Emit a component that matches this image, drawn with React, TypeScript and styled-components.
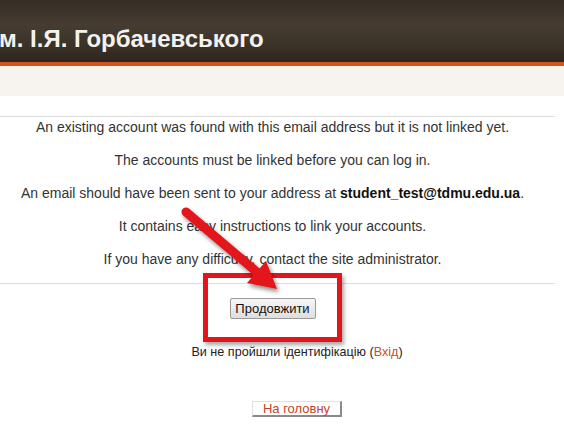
import styled, { createGlobalStyle } from "styled-components";

const GlobalStyle = createGlobalStyle`
  html, body {
    margin: 0;
    padding: 0;
    background: #fff;
    overflow: hidden;
  }
  body {
    font-family: "Liberation Sans", Arial, sans-serif;
    color: #333;
  }
`;

const Page = styled.div`
  position: relative;
  width: 564px;
  height: 439px;
  overflow: hidden;
`;

const Header = styled.header`
  height: 62px;
  display: flex;
  align-items: flex-end;
  background: linear-gradient(to bottom, #352c24 0%, #463c32 40%, #3a3128 75%, #2d251e 100%);
  overflow: hidden;
`;

const SiteTitle = styled.h1`
  margin: 0 0 10px -1px;
  font-size: 24px;
  line-height: 26px;
  font-weight: bold;
  color: #f4f2ee;
  white-space: nowrap;
`;

const Stripe = styled.div`
  height: 4px;
  background: #d4531f;
`;

const NavBar = styled.div`
  height: 30px;
  background: #f5f4ef;
`;

const Notice = styled.section`
  margin-top: 20px;
  width: 555px;
  border-top: 1px solid #dcdcdc;
  border-bottom: 1px solid #dcdcdc;
  padding: 2px 10px 16px 0;
  box-sizing: border-box;
  text-align: center;
`;

const Line = styled.p`
  margin: 0 0 17px;
  font-size: 14px;
  line-height: 16px;
  color: #333;
  &:last-child {
    margin-bottom: 0;
  }
  strong {
    color: #111;
  }
`;

const Actions = styled.div`
  display: flex;
  justify-content: center;
  width: 545px;
  padding-top: 14px;
`;

const ContinueButton = styled.button`
  width: 86px;
  height: 21px;
  padding: 0;
  font-family: "Liberation Sans", Arial, sans-serif;
  font-size: 13px;
  color: #111;
  background: linear-gradient(to bottom, #f6f6f6, #dedede);
  border: 1px solid #9a9a9a;
  border-radius: 2px;
`;

const Footer = styled.div`
  display: flex;
  flex-direction: column;
  align-items: center;
  padding-left: 30px;
  padding-top: 25px;
`;

const LoginInfo = styled.div`
  font-size: 12.6px;
  line-height: 16px;
  color: #222;
  a {
    color: #c8502a;
    text-decoration: none;
  }
`;

const HomeButton = styled.button`
  margin-top: 41px;
  width: 90px;
  height: 16px;
  padding: 0;
  font-family: "Liberation Sans", Arial, sans-serif;
  font-size: 13px;
  line-height: 12px;
  color: #c0442a;
  background: #fff;
  border: 1px solid;
  border-color: #e2e2e2 #8a8a8a #8a8a8a #e2e2e2;
  border-right-width: 2px;
  border-bottom-width: 2px;
`;

const Highlight = styled.div`
  position: absolute;
  left: 203px;
  top: 273px;
  width: 139px;
  height: 69px;
  box-sizing: border-box;
  border: 5px solid #e3141b;
  box-shadow: 2px 3px 4px rgba(0, 0, 0, 0.35);
  pointer-events: none;
`;

const Arrow = styled.svg`
  position: absolute;
  left: 0;
  top: 0;
  pointer-events: none;
`;

export default function App() {
  return (
    <Page>
      <GlobalStyle />
      <Header>
        <SiteTitle>м. І.Я. Горбачевського</SiteTitle>
      </Header>
      <Stripe />
      <NavBar />
      <Notice>
        <Line>An existing account was found with this email address but it is not linked yet.</Line>
        <Line>The accounts must be linked before you can log in.</Line>
        <Line>
          An email should have been sent to your address at <strong>student_test@tdmu.edu.ua</strong>.
        </Line>
        <Line>It contains easy instructions to link your accounts.</Line>
        <Line>If you have any difficulty, contact the site administrator.</Line>
      </Notice>
      <Actions>
        <ContinueButton>Продовжити</ContinueButton>
      </Actions>
      <Footer>
        <LoginInfo>
          Ви не пройшли ідентифікацію (<a href="#">Вхід</a>)
        </LoginInfo>
        <HomeButton>На головну</HomeButton>
      </Footer>
      <Highlight />
      <Arrow width="564" height="439" viewBox="0 0 564 439">
        <defs>
          <filter id="shadow" x="-20%" y="-20%" width="140%" height="140%">
            <feDropShadow dx="2" dy="3" stdDeviation="2" floodColor="#000" floodOpacity="0.45" />
          </filter>
        </defs>
        <g filter="url(#shadow)">
          <line x1="186" y1="212" x2="258" y2="273" stroke="#e3141b" strokeWidth="9" strokeLinecap="round" />
          <polygon points="277,289 247,283 266,261" fill="#e3141b" />
        </g>
      </Arrow>
    </Page>
  );
}
